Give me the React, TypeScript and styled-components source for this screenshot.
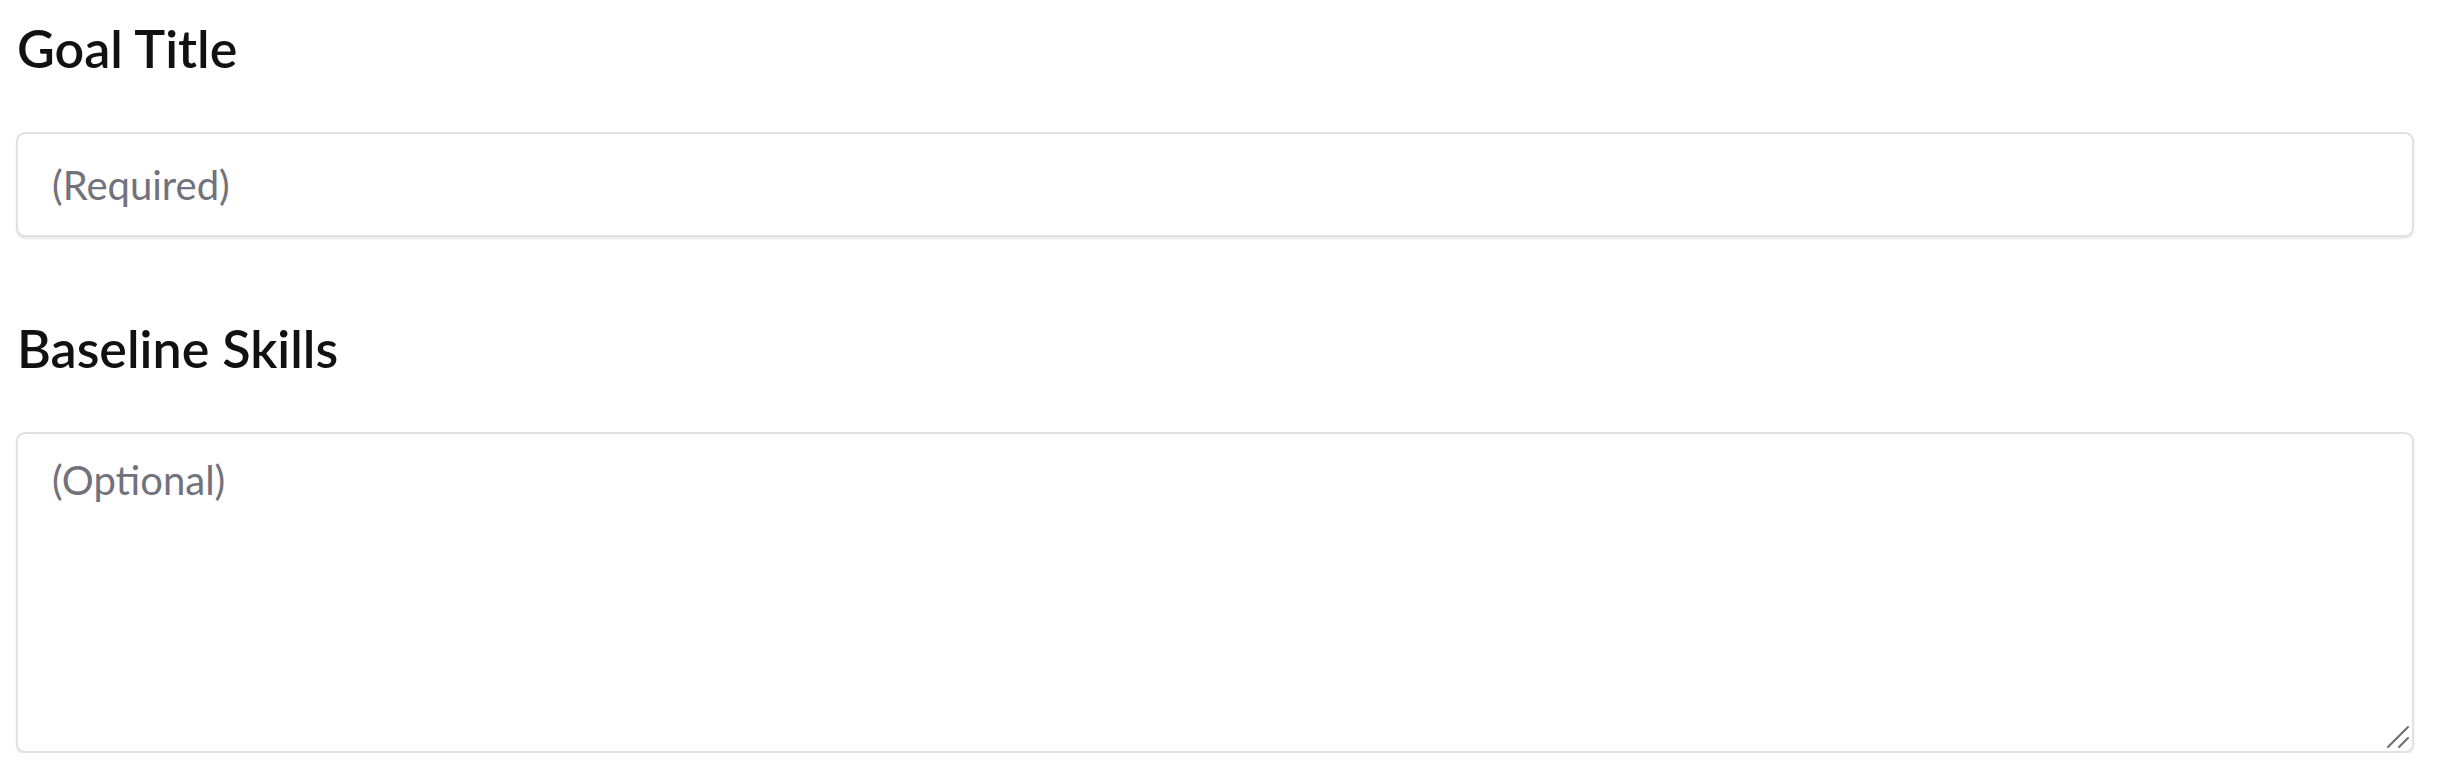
import styled, { createGlobalStyle } from "styled-components";

// ================================================
//              Components
// ================================================
const GlobalStyle = createGlobalStyle`
  body {
    margin: 0;
    background: #ffffff;
    font-family: Lato, "Noto Sans", sans-serif;
  }
`;
const Form = styled.form`
  display: flex;
  flex-direction: column;
  gap: 80px;
  padding: 17px 24px 0 16px;
`;
const Field = styled.div`
  display: flex;
  flex-direction: column;
`;
const Label = styled.label`
  font-size: 52px;
  font-weight: 600;
  line-height: 62px;
  color: #111111;
  margin-left: 1px;
  margin-bottom: 53px;
`;
const boxStyles = `
  box-sizing: border-box;
  width: 100%;
  border: 2px solid #e1e1e1;
  border-radius: 9px;
  box-shadow: 0 2px 2px rgba(0, 0, 0, 0.09);
  background: #ffffff;
  font-family: Lato, "Noto Sans", sans-serif;
  font-size: 40px;
  color: #111111;
  padding: 0 34px;
  outline: none;
  &::placeholder {
    color: #72727c;
  }
`;
const Input = styled.input`
  ${boxStyles}
  height: 105px;
`;
const AreaWrap = styled.div`
  position: relative;
`;
const TextArea = styled.textarea`
  ${boxStyles}
  display: block;
  height: 321px;
  padding-top: 22px;
  resize: none;
`;
const Grip = styled.svg`
  position: absolute;
  right: 4px;
  bottom: 4px;
  width: 24px;
  height: 24px;
  pointer-events: none;
`;

// ================================================
//                App
// ================================================
const App = () => {
  return (
    <>
      <GlobalStyle />
      <Form onSubmit={(e) => e.preventDefault()}>
        <Field>
          <Label htmlFor="goal-title">Goal Title</Label>
          <Input id="goal-title" placeholder="(Required)" />
        </Field>
        <Field>
          <Label htmlFor="baseline">Baseline Skills</Label>
          <AreaWrap>
            <TextArea id="baseline" placeholder="(Optional)" />
            <Grip viewBox="0 0 24 24">
              <line x1="2" y1="22" x2="22" y2="2" stroke="#6b6b6b" strokeWidth="2" strokeLinecap="round" />
              <line x1="13" y1="22" x2="22" y2="13" stroke="#6b6b6b" strokeWidth="2" strokeLinecap="round" />
            </Grip>
          </AreaWrap>
        </Field>
      </Form>
    </>
  );
};

export default App;
